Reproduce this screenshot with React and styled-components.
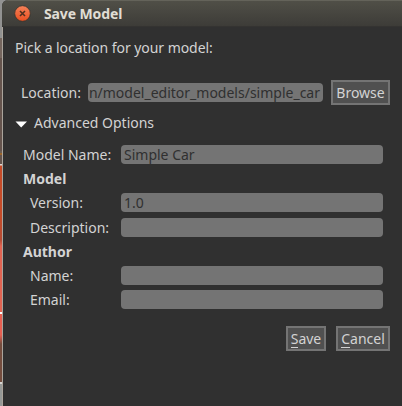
import React from 'react';
import styled, { createGlobalStyle } from 'styled-components';

const GlobalStyle = createGlobalStyle`
  * { box-sizing: border-box; }
  body {
    margin: 0;
    overflow: hidden;
    background: #303030;
    font: 14px/19px "Noto Sans", "Open Sans", sans-serif;
    color: #d3d3d3;
  }
`;

const Desktop = styled.div`
  width: 402px;
  height: 406px;
  padding-left: 2px;
  background: linear-gradient(
    #929291 0 38px, #75665e 38px 58px, #65544d 58px 151px, #6d5d52 151px 153px,
    #9c6428 153px 155px, #65544d 155px 164px, #ded7d3 164px 165px,
    #c64b28 166px 215px, #b64c34 240px, #e26452 246px 312px,
    #fff 312px 314px, #e75f51 314px 335px, #744d3e 344px 382px,
    #d6d6d3 382px 384px, #959896 384px
  );
`;

const Window = styled.div`
  width: 400px;
  height: 406px;
  border-radius: 6px 0 0 0;
  overflow: hidden;
  background: #303030;
`;

const TitleBar = styled.header`
  display: flex;
  align-items: center;
  gap: 13px;
  height: 27px;
  padding-left: 12px;
  border-top: 1px solid #64635a;
  border-bottom: 1px solid #343331;
  background: linear-gradient(#504f47, #3d3c38);
`;

const Title = styled.h1`
  margin: 0;
  font-size: 14px;
  line-height: 25px;
  letter-spacing: -0.12px;
  color: #e0ddd4;
`;

const Body = styled.main`
  height: 379px;
  padding: 11px 12px 0;
  border-left: 1px solid #aaa49c;
`;

const Text = styled.span`
  display: block;
  white-space: nowrap;
  letter-spacing: ${(p) => p.$track ?? 0}px;
`;

const LocationRow = styled.div`
  display: flex;
  align-items: center;
  margin-top: 23px;
  padding-left: 6px;
`;

const LocationLabel = styled(Text)`
  width: 67px;
`;

const Field = styled.div`
  display: flex;
  width: ${(p) => p.$width}px;
  height: 19px;
  padding: 0 3px;
  border-radius: 4px;
  overflow: hidden;
  justify-content: ${(p) => (p.$scrolled ? 'flex-end' : 'flex-start')};
  background: #747474;
  color: #303030;
`;

const Button = styled.button`
  width: ${(p) => p.$width}px;
  height: 25px;
  padding: 0;
  border: 2px solid #747474;
  background: #505050;
  color: #d3d3d3;
  font: inherit;
  line-height: 21px;
  letter-spacing: ${(p) => p.$track ?? 0}px;
  white-space: nowrap;
`;

const BrowseButton = styled(Button)`
  margin-left: 8px;
`;

const Mnemonic = styled.span`
  display: inline-block;
  height: 19px;
  line-height: 19px;
  border-bottom: 1px solid #d3d3d3;
`;

const Expander = styled.div`
  display: flex;
  align-items: center;
  gap: 6px;
  height: 19px;
  margin-top: 8px;
`;

const Form = styled.div`
  display: grid;
  grid-template-columns: 98px 262px;
  grid-template-rows: 19px 19px 19px 19px 19px 19px 19px;
  row-gap: 5.2px;
  margin: 13px 0 0 8px;
`;

const Heading = styled.h2`
  grid-column: 1 / -1;
  margin: 0;
  font-size: 14px;
  line-height: 19px;
  letter-spacing: ${(p) => p.$track ?? 0}px;
`;

const SubLabel = styled(Text)`
  padding-left: 7px;
`;

const Actions = styled.footer`
  display: flex;
  justify-content: flex-end;
  gap: 10px;
  margin-top: 17px;
`;

function CloseIcon() {
  return (
    <svg width="17" height="17" viewBox="0 0 17 17">
      <defs>
        <linearGradient id="close-fill" x1="0" y1="0" x2="0" y2="1">
          <stop offset="0" stopColor="#f58259" />
          <stop offset="1" stopColor="#e84f20" />
        </linearGradient>
      </defs>
      <circle cx="8.5" cy="8.5" r="7.8" fill="url(#close-fill)" stroke="#35342f" strokeWidth="0.8" />
      <path d="M6 6l5 5M11 6l-5 5" stroke="#50301f" strokeWidth="1.6" />
    </svg>
  );
}

function Triangle() {
  return (
    <svg width="13" height="19" viewBox="0 0 13 19">
      <path d="M0.5 8.5h11.5L6.2 14.5z" fill="#fff" />
    </svg>
  );
}

export default function App() {
  return (
    <>
      <GlobalStyle />
      <Desktop>
        <Window>
          <TitleBar>
            <CloseIcon />
            <Title>Save Model</Title>
          </TitleBar>
          <Body>
            <Text $track={-0.05}>Pick a location for your model:</Text>
            <LocationRow>
              <LocationLabel>Location:</LocationLabel>
              <Field $width={235} $scrolled>
                <Text>n/model_editor_models/simple_car</Text>
              </Field>
              <BrowseButton $width={59}>Browse</BrowseButton>
            </LocationRow>
            <Expander>
              <Triangle />
              <Text>Advanced Options</Text>
            </Expander>
            <Form>
              <Text>Model Name:</Text>
              <Field $width={262}><Text>Simple Car</Text></Field>
              <Heading>Model</Heading>
              <SubLabel>Version:</SubLabel>
              <Field $width={262}><Text>1.0</Text></Field>
              <SubLabel>Description:</SubLabel>
              <Field $width={262} />
              <Heading>Author</Heading>
              <SubLabel>Name:</SubLabel>
              <Field $width={262} />
              <SubLabel>Email:</SubLabel>
              <Field $width={262} />
            </Form>
            <Actions>
              <Button $width={40}><Mnemonic>S</Mnemonic>ave</Button>
              <Button $width={54}><Mnemonic>C</Mnemonic>ancel</Button>
            </Actions>
          </Body>
        </Window>
      </Desktop>
    </>
  );
}
